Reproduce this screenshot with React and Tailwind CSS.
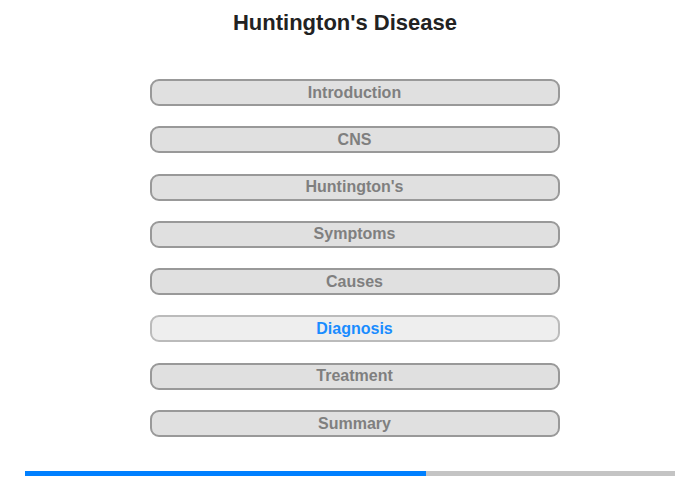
const items = [
  "Introduction",
  "CNS",
  "Huntington's",
  "Symptoms",
  "Causes",
  "Diagnosis",
  "Treatment",
  "Summary",
];

const active = "Diagnosis";

export default function App() {
  return (
    <div className="w-[700px] h-[480px] bg-white flex flex-col items-center font-['Liberation_Sans',Arial,sans-serif]">
      <h1 className="mt-[10px] mr-[10px] text-[22px] leading-[26px] font-bold text-[#222]">
        Huntington's Disease
      </h1>

      <div className="mt-[43px] flex flex-col gap-[20.3px] w-[410px] ml-[9px]">
        {items.map((label) => (
          <button
            key={label}
            className={
              label === active
                ? "h-[27px] rounded-[9px] border-2 border-[#bbbbbb] bg-[#eeeeee] text-[#1a8cff] text-[16px] font-bold leading-none"
                : "h-[27px] rounded-[9px] border-2 border-[#999999] bg-[#e0e0e0] text-[#7f7f7f] text-[16px] font-bold leading-none"
            }
          >
            {label}
          </button>
        ))}
      </div>

      {/* progress */}
      <div className="mt-[34px] w-[650px] h-[5px] bg-[#c4c4c4] flex">
        <div className="w-[401px] h-full bg-[#0080ff]" />
      </div>
    </div>
  );
}
